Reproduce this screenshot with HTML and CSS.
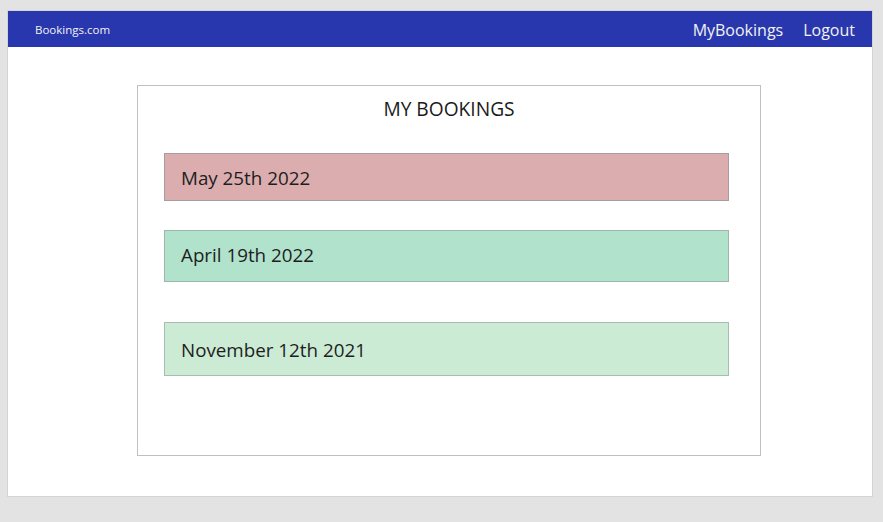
FILE: index.html
```html
<!DOCTYPE html>
<html lang="en">
<head>
<meta charset="utf-8">
<title>Bookings.com</title>
<link rel="stylesheet" href="styles.css">
</head>
<body>
<div class="frame">
  <header class="topbar">
    <div class="brand">Bookings.com</div>
    <nav class="nav">
      <a class="nav-link" href="#">MyBookings</a>
      <a class="nav-link" href="#">Logout</a>
    </nav>
  </header>
  <main class="content">
    <section class="card">
      <h1 class="card-title">MY BOOKINGS</h1>
      <div class="booking booking-red">May 25th 2022</div>
      <div class="booking booking-teal">April 19th 2022</div>
      <div class="booking booking-mint">November 12th 2021</div>
    </section>
  </main>
</div>
</body>
</html>
```
FILE: styles.css
```css
html, body {
  margin: 0;
  padding: 0;
}
body {
  background: #e3e3e3;
  font-family: "Open Sans", "Noto Sans", sans-serif;
  padding: 10px 0 0 7px;
  height: 522px;
  box-sizing: border-box;
}
.frame {
  width: 864px;
  height: 485px;
  background: #ffffff;
  border: 1px solid #d4d4d4;
  display: flex;
  flex-direction: column;
}
.topbar {
  height: 36px;
  background: #2837ad;
  color: #f2f2f2;
  display: flex;
  align-items: center;
  justify-content: space-between;
  padding: 0 17px 0 27px;
}
.brand {
  font-size: 11.5px;
  padding-top: 1px;
}
.nav {
  display: flex;
  gap: 20px;
  padding-top: 2px;
}
.nav-link {
  color: #f2f2f2;
  text-decoration: none;
  font-size: 16px;
}
.content {
  padding: 38px 0 0 129px;
}
.card {
  width: 596px;
  height: 369px;
  border: 1px solid #c0c0c0;
  padding: 0 0 0 26px;
}
.card-title {
  margin: 0 0 0 -26px;
  font-weight: 400;
  font-size: 19.2px;
  color: #1a1a1a;
  text-align: center;
  width: 622px;
  padding-top: 11px;
  line-height: 24px;
}
.booking {
  border: 1px solid #a8a8a8;
  font-size: 18.8px;
  color: #1e1e1e;
  padding-left: 16px;
  box-sizing: border-box;
  width: 565px;
  line-height: 24px;
}
.booking-red {
  background: #dbadaf;
  border-color: #a89c9c;
  margin-top: 32px;
  height: 48px;
  padding-top: 12px;
}
.booking-teal {
  background: #b0e2cc;
  border-color: #9fb5aa;
  margin-top: 29px;
  height: 52px;
  padding-top: 12px;
}
.booking-mint {
  background: #cbebd4;
  border-color: #a9bcaf;
  margin-top: 40px;
  height: 54px;
  padding-top: 15px;
}
```
